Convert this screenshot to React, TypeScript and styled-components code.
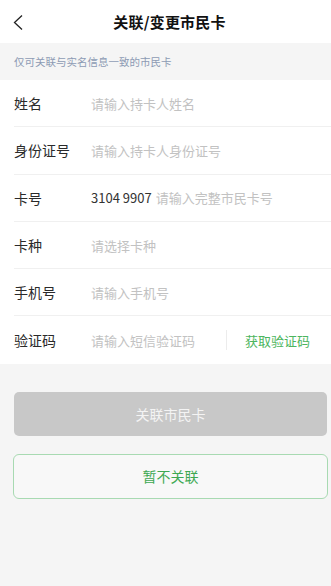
import React, { useState } from "react"
import styled, { createGlobalStyle } from "styled-components"

const GlobalStyle = createGlobalStyle`
  html, body {
    margin: 0;
    padding: 0;
    background: #f5f5f5;
    font-family: "Noto Sans CJK SC", "Noto Sans", sans-serif;
  }
  * { box-sizing: border-box; }
`

type Field = {
  label: string
  placeholder: string
  prefix?: string
  action?: string
}

const fields: Field[] = [
  { label: "姓名", placeholder: "请输入持卡人姓名" },
  { label: "身份证号", placeholder: "请输入持卡人身份证号" },
  { label: "卡号", placeholder: "请输入完整市民卡号", prefix: "3104 9907" },
  { label: "卡种", placeholder: "请选择卡种" },
  { label: "手机号", placeholder: "请输入手机号" },
  { label: "验证码", placeholder: "请输入短信验证码", action: "获取验证码" },
]

export default function App() {
  const [values, setValues] = useState<Record<string, string>>({})

  return (
    <>
      <GlobalStyle />
      <Page>
        <Header>
          <Back aria-label="返回">
            <svg width="12" height="17" viewBox="0 0 12 17" fill="none">
              <path d="M10 1.5L2.5 8.5L10 15.5" stroke="#222" strokeWidth="1.3" />
            </svg>
          </Back>
          <Title>关联/变更市民卡</Title>
        </Header>
        <Notice>仅可关联与实名信息一致的市民卡</Notice>
        <Form>
          {fields.map((f, i) => (
            <Row key={f.label} $last={i === fields.length - 1}>
              <Label>{f.label}</Label>
              {f.prefix && <Prefix>{f.prefix}</Prefix>}
              <Input
                placeholder={f.placeholder}
                value={values[f.label] || ""}
                onChange={(e) => setValues({ ...values, [f.label]: e.target.value })}
              />
              {f.action && (
                <>
                  <VDivider />
                  <Action>{f.action}</Action>
                </>
              )}
            </Row>
          ))}
        </Form>
        <Buttons>
          <PrimaryButton disabled>关联市民卡</PrimaryButton>
          <GhostButton>暂不关联</GhostButton>
        </Buttons>
      </Page>
    </>
  )
}

const Page = styled.div`
  display: flex;
  flex-direction: column;
  width: 100%;
  min-height: 586px;
  background: #f5f5f5;
`
const Header = styled.div`
  position: relative;
  display: flex;
  justify-content: center;
  align-items: center;
  height: 43px;
  padding-left: 8px;
  background: #fff;
`
const Back = styled.button`
  position: absolute;
  left: 8px;
  top: 12px;
  display: flex;
  align-items: center;
  justify-content: center;
  width: 20px;
  height: 20px;
  padding: 0;
  border: none;
  background: none;
`
const Title = styled.div`
  font-size: 15px;
  font-weight: 700;
  color: #111;
  letter-spacing: 0.2px;
`
const Notice = styled.div`
  display: flex;
  align-items: center;
  height: 37px;
  padding: 0 14px;
  font-size: 10.5px;
  color: #8d9bb4;
`
const Form = styled.div`
  display: flex;
  flex-direction: column;
  padding-left: 14px;
  background: #fff;
`
const Row = styled.div<{ $last?: boolean }>`
  display: flex;
  align-items: center;
  height: 47.3px;
  border-bottom: ${(p) => (p.$last ? "none" : "1px solid #f0f0f0")};
`
const Label = styled.div`
  flex: 0 0 77px;
  font-size: 14px;
  color: #2a2a2a;
`
const Prefix = styled.div`
  margin-right: 4px;
  font-size: 13px;
  color: #333;
  white-space: nowrap;
`
const Input = styled.input`
  flex: 1;
  min-width: 0;
  padding: 0;
  border: none;
  outline: none;
  background: transparent;
  font-family: inherit;
  font-size: 13px;
  color: #333;
  &::placeholder {
    color: #c2c2c2;
  }
`
const VDivider = styled.div`
  width: 1px;
  height: 20px;
  background: #ececec;
`
const Action = styled.div`
  padding: 0 21px 0 18px;
  font-size: 13px;
  color: #4cb55e;
  white-space: nowrap;
`
const Buttons = styled.div`
  display: flex;
  flex-direction: column;
  gap: 18px;
  padding: 28px 3px 0 13px;
`
const PrimaryButton = styled.button`
  height: 44px;
  margin: 0 1px;
  border: none;
  border-radius: 5px;
  background: #c8c8c8;
  color: #f4f4f4;
  font-family: inherit;
  font-size: 14px;
`
const GhostButton = styled.button`
  height: 45px;
  border: 1px solid #a8dab2;
  border-radius: 6px;
  background: #f8f8f8;
  color: #3ea852;
  font-family: inherit;
  font-size: 14px;
`
